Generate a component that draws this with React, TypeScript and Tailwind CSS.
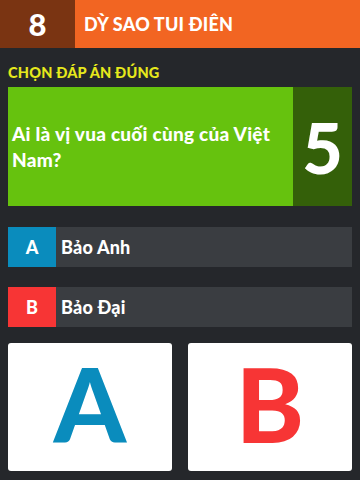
import React from 'react'

const options = [
  { key: 'A', label: 'Bảo Anh', color: 'bg-[#0a8cbd]' },
  { key: 'B', label: 'Bảo Đại', color: 'bg-[#f73535]' },
]

const App: React.FC = () => {
  return (
    <div className="w-[360px] h-[480px] bg-[#25272b] overflow-hidden font-['Lato',sans-serif] text-white">
      {/* Header */}
      <div className="flex h-12 bg-[#f26522]">
        <div className="w-[75px] bg-[#7a3412] flex items-center justify-center text-[31px] font-black">8</div>
        <div className="flex items-center pl-[9px] text-[18px] font-black tracking-[0.2px]">DỲ SAO TUI ĐIÊN</div>
      </div>

      <div className="px-2">
        <div className="pt-[17px] pb-[6px] text-[14.5px] font-black text-[#e6e81c] leading-[16px] tracking-[0.2px]">CHỌN ĐÁP ÁN ĐÚNG</div>

        {/* Question */}
        <div className="flex h-[119px] bg-[#66c20e]">
          <div className="flex-1 flex items-center pl-[4px] pr-1 text-[19px] font-black leading-[26px] tracking-[0.25px]">
            Ai là vị vua cuối cùng của Việt Nam?
          </div>
          <div className="w-[59px] bg-[#346009] flex items-center justify-center text-[70px] font-black leading-none">5</div>
        </div>

        {/* Options */}
        <div className="mt-[21px] flex flex-col gap-5">
          {options.map((o) => (
            <div key={o.key} className="flex h-10 bg-[#3a3d41]">
              <div className={`w-12 ${o.color} flex items-center justify-center text-[18px] font-black`}>{o.key}</div>
              <div className="flex items-center pl-[5px] text-[18px] font-black tracking-[0.2px]">{o.label}</div>
            </div>
          ))}
        </div>

        {/* Answer cards */}
        <div className="mt-4 grid grid-cols-2 gap-4">
          <div className="h-32 pb-2 bg-white rounded-[3px] flex items-center justify-center text-[103px] font-black text-[#0a8cbd] leading-none">A</div>
          <div className="h-32 pb-2 bg-white rounded-[3px] flex items-center justify-center text-[103px] font-black text-[#f73535] leading-none">B</div>
        </div>
      </div>
    </div>
  )
}

export default App
